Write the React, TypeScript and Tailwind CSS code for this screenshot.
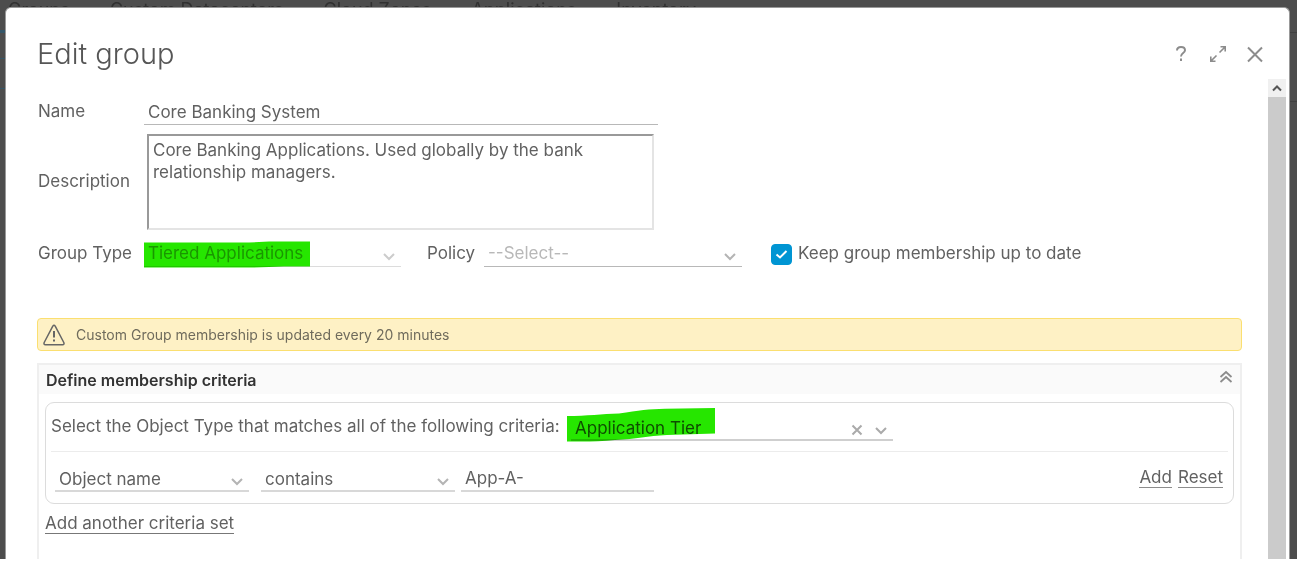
import React from "react";

const tabs = ["Groups", "Custom Datacenters", "Cloud Zones", "Applications", "Inventory"];

function Chevron({ className }: { className: string }) {
  return (
    <svg
      viewBox="0 0 12 8"
      aria-hidden="true"
      className={`pointer-events-none absolute bottom-[6px] h-2 w-3 fill-none stroke-2 ${className}`}
    >
      <path d="M1 1 L6 6 L11 1" />
    </svg>
  );
}

type PickerProps = {
  id: string;
  value: string;
  options?: string[];
  disabled?: boolean;
  label?: string;
  className: string;
  tone: string;
  chevron: string;
  children?: React.ReactNode;
};

function Picker({ id, value, options = [], disabled, label, className, tone, chevron, children }: PickerProps) {
  return (
    <div className={`relative shrink-0 ${className}`}>
      <select
        id={id}
        aria-label={label}
        disabled={disabled}
        defaultValue={value}
        className={`block w-full appearance-none bg-transparent pl-1 pr-6 opacity-100 outline-none ${tone}`}
      >
        {[value, ...options].map((o) => (
          <option key={o}>{o}</option>
        ))}
      </select>
      <Chevron className={chevron} />
      {children}
    </div>
  );
}

function Header() {
  return (
    <header className="flex items-center justify-between pt-7 pr-[25px] pb-[7px] pl-[31px]">
      <h1 className="text-[29px] leading-9 font-light text-[#565656]">Edit group</h1>
      <div className="flex items-center gap-[19px] text-[#8c8c8c]">
        <button type="button" aria-label="Help" className="flex size-[18px] items-center justify-center">
          <svg viewBox="0 0 18 18" className="size-[18px] fill-none stroke-current stroke-2">
            <path d="M5 5.500 C5 3 6.800 2 9 2 C11.400 2 13 3.300 13 5.300 C13 8.200 9 8 9 11.500" />
            <path d="M9 13.500 V16" />
          </svg>
        </button>
        <button type="button" aria-label="Expand" className="flex size-[18px] items-center justify-center">
          <svg viewBox="0 0 18 18" className="size-[18px] fill-none stroke-current stroke-[1.600]">
            <path d="M10.500 7.500 L16 2 M11.500 1.800 H16.200 V6.500 M7.500 10.500 L2 16 M1.800 11.500 V16.200 H6.500" />
          </svg>
        </button>
        <button type="button" aria-label="Close" className="flex size-[18px] items-center justify-center">
          <svg viewBox="0 0 18 18" className="size-[18px] fill-none stroke-current stroke-2">
            <path d="M2 2.500 L16 16.500 M16 2.500 L2 16.500" />
          </svg>
        </button>
      </div>
    </header>
  );
}

function Criteria() {
  return (
    <section className="mt-3 flex-1 border-2 border-b-0 border-[#efefef]">
      <div className="flex h-[29px] items-center justify-between bg-[#fafafa] pr-[7px] pl-[7px]">
        <h2 className="text-base font-semibold text-[#333]">Define membership criteria</h2>
        <button type="button" aria-label="Collapse" className="self-start pt-[5px] text-[#8c8c8c]">
          <svg viewBox="0 0 14 14" className="size-[14px] fill-none stroke-current stroke-[1.800]">
            <path d="M1.500 7 L7 2 L12.500 7 M1.500 12 L7 7 L12.500 12" />
          </svg>
        </button>
      </div>
      <div className="mx-[6px] mt-2 rounded-[9px] border border-[#dcdcdc] px-[5px]">
        <div className="flex h-[49px] items-center border-b border-[#ececec]">
          <label htmlFor="object-type" className="w-[520px] shrink-0 whitespace-nowrap">
            Select the Object Type that matches all of the following criteria:
          </label>
          <Picker
            id="object-type"
            value="Application Tier"
            className="w-[322px]"
            tone="h-7 border-b-2 border-[#cfcfcf] pt-[3px] text-[#565656]"
            chevron="right-[6px] stroke-[#aaa]"
          >
            <button type="button" aria-label="Clear" className="absolute right-[30px] bottom-[5px] text-[#aaa]">
              <svg viewBox="0 0 12 12" className="size-3 fill-none stroke-current stroke-2">
                <path d="M1.500 1.500 L10.500 10.500 M10.500 1.500 L1.500 10.500" />
              </svg>
            </button>
            <svg
              viewBox="0 0 148 34"
              aria-hidden="true"
              className="pointer-events-none absolute bottom-[-1px] left-[-4px] h-[34px] w-[148px] fill-[#26e600] mix-blend-multiply"
            >
              <path d="M0 8 C20 8 35 6 52 5.500 C72 2.500 82 1 98 .800 L148 0 V25.500 L100 27 C80 28 70 31 48 32 C30 34 15 33.500 0 33.500 Z" />
            </svg>
          </Picker>
        </div>
        <div className="flex h-[51px] items-center justify-between pl-1 pr-[5px]">
          <div className="flex">
            <Picker
              id="property"
              label="Property"
              value="Object name"
              className="w-[194px]"
              tone="h-7 border-b-2 border-[#d8d8d8] pt-[3px]"
              chevron="right-[6px] stroke-[#b4b4b4]"
            />
            <Picker
              id="operator"
              label="Operator"
              value="contains"
              options={["starts with", "ends with"]}
              className="ml-3 w-[194px]"
              tone="h-7 border-b-2 border-[#d8d8d8] pt-[3px]"
              chevron="right-[6px] stroke-[#b4b4b4]"
            />
            <input
              aria-label="Value"
              defaultValue="App-A-"
              className="ml-[6px] h-7 w-[193px] border-b-2 border-[#d8d8d8] pt-[3px] pl-1 outline-none"
            />
          </div>
          <div className="flex gap-[6px] leading-5">
            <a href="#add" className="border-b border-[#8c8c8c]">Add</a>
            <a href="#reset" className="border-b border-[#8c8c8c]">Reset</a>
          </div>
        </div>
      </div>
      <a href="#criteria" className="mt-[9px] ml-[6px] inline-block border-b border-[#777] leading-5">
        Add another criteria set
      </a>
    </section>
  );
}

export default function App() {
  return (
    <div className="h-screen overflow-hidden bg-white pr-1 pb-[3px] font-['Inter',sans-serif] text-[17px] text-[#616161]">
      <div className="flex h-full flex-col bg-[#4d4d4d]">
        <nav className="flex h-[7px] shrink-0 gap-10 overflow-hidden pl-2 text-[18px] leading-5 text-[#303030]">
          {tabs.map((t) => (
            <span key={t} className="whitespace-nowrap">{t}</span>
          ))}
        </nav>
        <div className="flex min-h-0 flex-1">
          <div className="w-[5px] shrink-0 pt-[23px]">
            <div className="h-[3px] bg-[#345668]" />
            <div className="mt-[25px] h-px bg-[#345668]" />
            <div className="mt-[29px] h-px bg-[#345668]" />
          </div>
          <main className="flex min-w-0 flex-1 flex-col overflow-hidden rounded-t-[6px] border border-b-0 border-[#999] bg-white">
            <Header />
            <div className="flex min-h-0 flex-1">
              <form className="flex min-w-0 flex-1 flex-col overflow-hidden pt-5 pr-[26px] pl-[31px]">
                <div className="flex items-center pl-px">
                  <label htmlFor="name" className="w-[106px] shrink-0">Name</label>
                  <input
                    id="name"
                    defaultValue="Core Banking System"
                    className="h-[26px] w-[514px] border-b border-[#b8b8b8] pl-1 outline-none"
                  />
                </div>
                <div className="mt-[9px] flex items-center pl-px">
                  <label htmlFor="description" className="w-[109px] shrink-0">Description</label>
                  <textarea
                    id="description"
                    defaultValue="Core Banking Applications. Used globally by the bank relationship managers."
                    className="h-24 w-[507px] resize-none border-2 border-t-[#999] border-r-[#e4e4e4] border-b-[#e4e4e4] border-l-[#999] px-1 py-[3px] leading-[22px] outline-none"
                  />
                </div>
                <div className="mt-[11px] flex items-center pl-px">
                  <label htmlFor="group-type" className="w-[106px] shrink-0">Group Type</label>
                  <Picker
                    id="group-type"
                    value="Tiered Applications"
                    disabled
                    className="w-[257px]"
                    tone="h-[26px] border-b border-[#dcdcdc] text-[#a8a8a8]"
                    chevron="right-[6px] stroke-[#ccc]"
                  >
                    <svg
                      viewBox="0 0 166 27"
                      aria-hidden="true"
                      className="pointer-events-none absolute bottom-[-1px] left-0 h-[27px] w-[166px] fill-[#26e600] mix-blend-multiply"
                    >
                      <path d="M0 1.500 H105 L125 .500 H166 V25.500 H140 L110 26.500 H0 Z" />
                    </svg>
                  </Picker>
                  <label htmlFor="policy" className="ml-[26px] w-[57px] shrink-0">Policy</label>
                  <Picker
                    id="policy"
                    value="--Select--"
                    className="w-[258px]"
                    tone="h-[26px] border-b border-[#b8b8b8] text-[#b8b8b8]"
                    chevron="right-[6px] stroke-[#b4b4b4]"
                  />
                  <label className="ml-[29px] flex items-center gap-[6px] whitespace-nowrap">
                    <span className="relative size-[21px]">
                      <input
                        type="checkbox"
                        defaultChecked
                        className="peer block size-[21px] appearance-none rounded-[4px] border border-[#0095d3] checked:bg-[#0095d3]"
                      />
                      <svg
                        viewBox="0 0 21 21"
                        aria-hidden="true"
                        className="pointer-events-none absolute inset-0 hidden fill-none stroke-white stroke-2 peer-checked:block"
                      >
                        <path d="M5.500 10.500 L9 13.500 L15.500 7" />
                      </svg>
                    </span>
                    Keep group membership up to date
                  </label>
                </div>
                <div
                  role="status"
                  className="mt-[51px] flex h-[33px] shrink-0 items-center gap-[11px] rounded-[4px] border border-[#fbdf70] bg-[#fef1c5] pl-[5px] text-[14px] text-[#6f6b5c]"
                >
                  <svg viewBox="0 0 22 22" aria-hidden="true" className="size-[22px] fill-none stroke-[#666] stroke-[1.500]">
                    <path d="M9.800 2.200 Q11 .400 12.200 2.200 L20.800 18.500 Q21.600 20.700 19.500 20.800 H2.500 Q.400 20.700 1.200 18.500 Z" strokeLinejoin="round" />
                    <path d="M11 7 V13.500 M11 15.500 V17.500" strokeWidth="2" />
                  </svg>
                  Custom Group membership is updated every 20 minutes
                </div>
                <Criteria />
              </form>
              <div className="mr-[3px] flex w-[18px] shrink-0 flex-col bg-[#cbcbcb]">
                <button type="button" aria-label="Scroll up" className="flex h-[18px] items-center justify-center bg-[#f0f0f0]">
                  <svg viewBox="0 0 10 8" className="h-2 w-[10px] fill-none stroke-[#555] stroke-2">
                    <path d="M1 6.500 L5 2.500 L9 6.500" />
                  </svg>
                </button>
              </div>
            </div>
          </main>
          <div className="w-[7px] shrink-0 pt-[25px]">
            <div className="h-px bg-[#404040]" />
            <div className="mt-[68px] h-px bg-[#404040]" />
          </div>
        </div>
      </div>
    </div>
  );
}
